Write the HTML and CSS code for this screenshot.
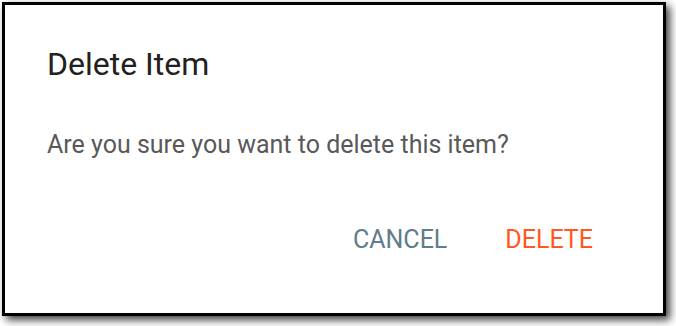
FILE: index.html
```html
<!DOCTYPE html>
<html>
<head>
<meta charset="utf-8">
<link rel="stylesheet" href="styles.css">
</head>
<body>
<div class="frame">
  <div class="dialog">
    <h2 class="title">Delete Item</h2>
    <p class="content">Are you sure you want to delete this item?</p>
    <div class="actions">
      <button class="btn cancel">CANCEL</button>
      <button class="btn delete">DELETE</button>
    </div>
  </div>
</div>
</body>
</html>
```

FILE: styles.css
```css
html, body {
  margin: 0;
  padding: 0;
  background: #fff;
}
.frame {
  width: 676px;
  height: 326px;
  padding: 2px 0 0 2px;
  box-sizing: border-box;
}
.dialog {
  width: 664px;
  height: 314px;
  box-sizing: border-box;
  border: 3px solid #000;
  background: #fff;
  box-shadow: 4px 4px 8px rgba(0,0,0,0.75);
  font-family: Roboto, "Liberation Sans", sans-serif;
  display: flex;
  flex-direction: column;
  padding: 0 42px;
}
.title {
  margin: 43px 0 0;
  font-size: 32px;
  font-weight: 400;
  color: #212121;
  line-height: 32px;
}
.content {
  margin: 52px 0 0;
  font-size: 25px;
  color: #595959;
  line-height: 25px;
}
.actions {
  display: flex;
  justify-content: flex-end;
  margin-top: 70px;
  gap: 58px;
  padding-right: 28px;
}
.btn {
  border: none;
  background: none;
  padding: 0;
  font-family: Roboto, "Liberation Sans", sans-serif;
  font-size: 25px;
  font-weight: 400;
  line-height: 25px;
}
.cancel { color: #607d8b; }
.delete { color: #ff5722; }
```
